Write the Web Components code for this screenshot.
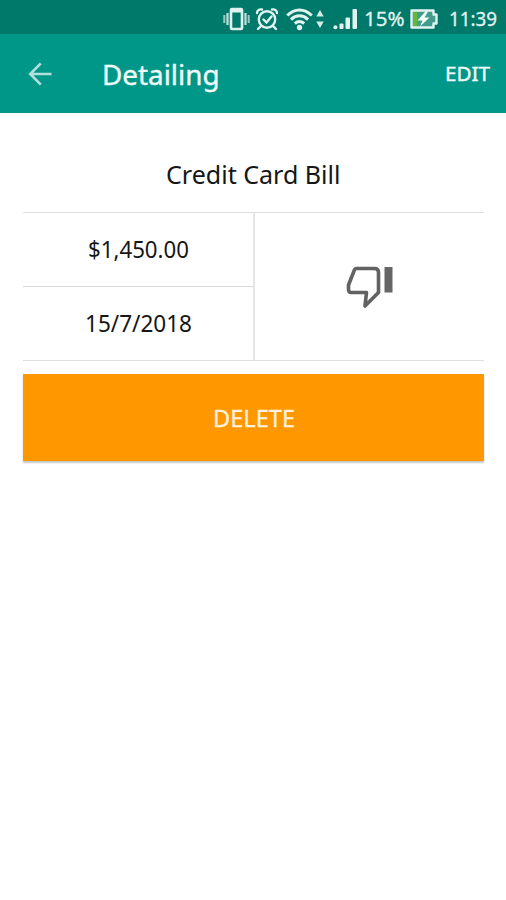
<!DOCTYPE html>
<html lang="en">
<head>
<meta charset="utf-8">
<title>Detailing</title>
<style>
body{margin:0;background:#fff;font-family:"Noto Sans","Open Sans",sans-serif;width:506px;height:900px;overflow:hidden}
</style>
</head>
<body>
<bill-screen></bill-screen>
<script>
// A single-line label whose glyphs are condensed or widened to the given width.
class FitLabel extends HTMLElement {
  connectedCallback() {
    const root = this.attachShadow({ mode: 'open' });
    root.innerHTML = `<style>
      :host{display:block;flex:none;line-height:1;white-space:nowrap}
      span{display:inline-block;transform-origin:0 50%}
    </style><span><slot></slot></span>`;
    const width = Number(this.getAttribute('width'));
    this.style.width = width + 'px';
    const span = root.querySelector('span');
    const natural = span.getBoundingClientRect().width;
    if (natural) span.style.transform = `scaleX(${width / natural})`;
  }
}

class StatusBar extends HTMLElement {
  connectedCallback() {
    this.attachShadow({ mode: 'open' }).innerHTML = `<style>
      :host{display:flex;box-sizing:border-box;height:34px;padding:3px 0 0 222px;background:#00796b;color:#e2f3f0;align-items:center;font-size:20px;-webkit-text-stroke:.3px #e2f3f0}
      svg{display:block;flex:none}
      .a{margin-left:5px}.b{margin-left:7px}.c{margin-left:9px}
      .d{margin-left:6px}.e{margin-left:5px}.f{margin-left:11px}
    </style>
    <svg width="28" height="24" viewBox="0 0 28 24" fill="none" stroke="#dff2ee" stroke-width="2">
      <rect x="9" y="2" width="11" height="20" rx="1" stroke-width="2.6"/><path d="M9 4h11" stroke-width="3"/>
      <path d="M5.500 6v12M23.500 6v12" stroke="#c0e0db" stroke-width="2.200"/><path d="M2.300 8v8M26.700 8v8" stroke="#9accc4" stroke-width="2"/>
    </svg>
    <svg class="a" width="24" height="24" viewBox="0 0 24 24" fill="none" stroke="#e2f3f0" stroke-width="2.400" stroke-linecap="round">
      <circle cx="12" cy="12.500" r="8.200"/><path d="M8.500 12.500l3 3 5-6M2 6C2 3.500 4 2 7 2.500M22 6c0-2.500-2-4-5-3.500M6 19l-3 3M18 19l3 3"/>
    </svg>
    <svg class="b" width="27" height="24" viewBox="0 0 27 24" fill="none" stroke="#e2f3f0" stroke-width="3">
      <path d="M1.200 8.500C8.500 1 18.500 1 25.800 8.500M5 12.600c5-5 12-5 17 0M8.800 16.500c3-2.600 6.400-2.600 9.400 0"/><circle cx="13.500" cy="20.500" r="2.700" fill="#e2f3f0" stroke="none"/>
    </svg>
    <svg style="margin-left:3px" width="8" height="20" viewBox="0 0 8 20" fill="#d4ece8"><path d="M4 1l3.700 6.500H.3zM4 19l3.700-6.500H.3z"/></svg>
    <svg class="c" width="25" height="24" viewBox="0 0 25 24" fill="#e2f3f0">
      <circle cx="2.400" cy="20.300" r="2"/><rect x="6.500" y="16.500" width="4" height="5.500" rx="1"/><rect x="12.500" y="10.500" width="4.500" height="11.500" rx="1"/><rect x="19.500" y="2" width="4.500" height="20" rx="1"/>
    </svg>
    <fit-label class="d" width="40.5">15%</fit-label>
    <svg class="e" width="28" height="20" viewBox="0 0 28 20">
      <path d="M1.500 1.500h22v4h3v9h-3v4h-22z" fill="#429d8c" stroke="#e2f3f0" stroke-width="2.400" stroke-linejoin="round"/>
      <path d="M3 3h4v14H3z" fill="#65b936"/><path d="M15.500 2.500L7.500 11.500h5l-2.500 6L19.500 8.500h-5L18 2.500z" fill="#f5fffb"/>
    </svg>
    <fit-label class="f" width="48">11:39</fit-label>`;
  }
}

class AppBar extends HTMLElement {
  connectedCallback() {
    this.attachShadow({ mode: 'open' }).innerHTML = `<style>
      :host{display:flex;box-sizing:border-box;height:78.500px;align-items:center;background:#009688;color:#f0faf8;padding:1px 16px 0 28px}
      svg{display:block;margin-right:49.500px}
      .t{font-size:28px;-webkit-text-stroke:.4px #f0faf8}
      .e{font-size:19.500px;margin-left:auto;-webkit-text-stroke:.4px #f0faf8}
    </style>
    <svg width="24" height="24" viewBox="0 0 24 24" fill="none" stroke="#b2e0db" stroke-width="2.600"><path d="M12.800 1.300L2.200 12l10.600 10.700M2.500 12H23.500"/></svg>
    <fit-label class="t" width="117.5"><slot></slot></fit-label>
    <fit-label class="e" width="45">EDIT</fit-label>`;
  }
}

class BillTable extends HTMLElement {
  connectedCallback() {
    this.attachShadow({ mode: 'open' }).innerHTML = `<style>
      :host{display:grid;box-sizing:border-box;grid-template-columns:230px 1fr;grid-template-rows:74px 73px;height:149px;border:solid #dedede;border-width:1px 0;color:#161616;font-size:23.500px}
      div{display:flex;align-items:center;justify-content:center;box-sizing:border-box;padding-top:2px}
      .row{border-bottom:1px solid #d8d8d8}
      .icon{grid-column:2;grid-row:1/3;border-left:2px solid #e6e6e6}
    </style>
    <div class="row"><fit-label width="101"><slot name="amount"></slot></fit-label></div>
    <div><fit-label width="107"><slot name="date"></slot></fit-label></div>
    <div class="icon"><svg width="48" height="44" viewBox="0 0 48 44">
      <path d="M10 3.500H28.500Q32.500 3.500 32.500 7.500V27.500L19 41L20.500 27.500H5Q2.500 27.500 2.500 24V20L8 6Q9 3.500 10 3.500Z" fill="none" stroke="#626262" stroke-width="3.600" stroke-linejoin="round"/>
      <path d="M38.500 2h8v25.500h-8z" fill="#666"/>
    </svg></div>`;
  }
}

class ActionButton extends HTMLElement {
  connectedCallback() {
    this.attachShadow({ mode: 'open' }).innerHTML = `<style>
      :host{display:block}
      button{all:unset;display:flex;box-sizing:border-box;width:100%;height:86.500px;padding-top:2px;align-items:center;justify-content:center;background:#ff9800;color:#fff0dc;font-size:23px;-webkit-text-stroke:.3px #fff0dc;box-shadow:0 2px 1.500px rgba(0,0,0,.22)}
    </style><button><fit-label width="82"><slot></slot></fit-label></button>`;
  }
}

class BillScreen extends HTMLElement {
  connectedCallback() {
    this.attachShadow({ mode: 'open' }).innerHTML = `<style>
      :host{display:block}
      main{padding:0 22px 0 23px}
      .title{display:flex;height:99px;box-sizing:border-box;padding-top:26px;align-items:center;justify-content:center;color:#161616;font-size:24.500px}
      action-button{margin-top:13.500px}
    </style>
    <status-bar></status-bar>
    <app-bar>Detailing</app-bar>
    <main>
      <div class="title"><fit-label width="174.5">Credit Card Bill</fit-label></div>
      <bill-table><span slot="amount">$1,450.00</span><span slot="date">15/7/2018</span></bill-table>
      <action-button>DELETE</action-button>
    </main>`;
  }
}
customElements.define('fit-label', FitLabel);
customElements.define('status-bar', StatusBar);
customElements.define('app-bar', AppBar);
customElements.define('bill-table', BillTable);
customElements.define('action-button', ActionButton);
customElements.define('bill-screen', BillScreen);
</script>
</body>
</html>
